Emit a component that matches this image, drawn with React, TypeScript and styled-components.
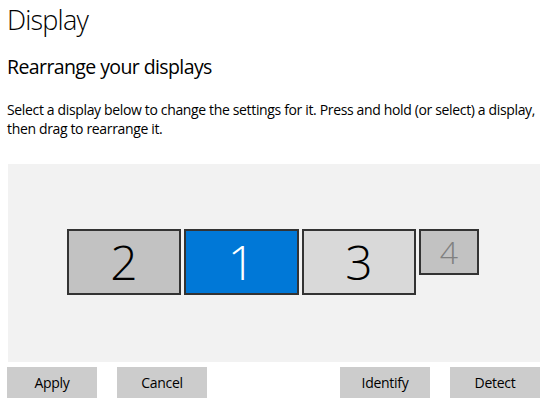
import React from 'react';
import styled, { createGlobalStyle } from 'styled-components';

const GlobalStyle = createGlobalStyle`
  html, body {
    margin: 0;
    padding: 0;
    background: #ffffff;
  }
  body {
    font-family: 'Open Sans', 'Noto Sans', 'Liberation Sans', sans-serif;
    color: #000000;
  }
`;

const Page = styled.div`
  width: 548px;
  height: 406px;
  overflow: hidden;
  padding: 0 8px 0 7px;
  box-sizing: border-box;
`;

const Title = styled.h1`
  margin: 0;
  padding-top: 1px;
  font-size: 27px;
  font-weight: 300;
  line-height: 38px;
  letter-spacing: -0.8px;
`;

const Subtitle = styled.h2`
  margin: 15px 0 0;
  font-size: 19.5px;
  font-weight: 400;
  line-height: 26px;
  letter-spacing: -0.6px;
`;

const Description = styled.p`
  margin: 20px 0 0;
  font-size: 14px;
  line-height: 19px;
  letter-spacing: -0.35px;
`;

const Arrangement = styled.div`
  margin: 26px 0 0 1px;
  width: 532px;
  height: 198px;
  background: #f2f2f2;
  display: flex;
  align-items: center;
  justify-content: center;
`;

const MonitorRow = styled.div`
  display: flex;
  align-items: flex-start;
  gap: 3px;
  margin-left: -2px;
  margin-top: -2px;
`;

type Variant = 'idle' | 'selected' | 'light' | 'inactive';

const backgrounds: Record<Variant, string> = {
  idle: '#c2c2c2',
  selected: '#0078d7',
  light: '#d9d9d9',
  inactive: '#c2c2c2',
};

const Monitor = styled.div<{ $variant: Variant; $w: number; $h: number }>`
  box-sizing: border-box;
  width: ${(p) => p.$w}px;
  height: ${(p) => p.$h}px;
  border: 2px solid #333333;
  background: ${(p) => backgrounds[p.$variant]};
  color: ${(p) =>
    p.$variant === 'selected' ? '#ffffff' : p.$variant === 'inactive' ? '#808080' : '#000000'};
  display: flex;
  align-items: center;
  justify-content: center;
  font-size: ${(p) => (p.$variant === 'inactive' ? 32 : 48)}px;
  font-weight: 300;
  line-height: 1;
`;

const ButtonBar = styled.div`
  margin-top: 5px;
  display: flex;
  gap: 20px;
`;

const Spacer = styled.div`
  flex: 1;
`;

const Button = styled.button`
  width: 90px;
  height: 31px;
  border: none;
  background: #cccccc;
  color: #000000;
  font-family: inherit;
  font-size: 14px;
  letter-spacing: -0.3px;
  padding: 0;
`;

const monitors: { id: string; variant: Variant; w: number; h: number }[] = [
  { id: '2', variant: 'idle', w: 114, h: 66 },
  { id: '1', variant: 'selected', w: 115, h: 66 },
  { id: '3', variant: 'light', w: 114, h: 66 },
  { id: '4', variant: 'inactive', w: 60, h: 46 },
];

export default function App() {
  return (
    <Page>
      <GlobalStyle />
      <Title>Display</Title>
      <Subtitle>Rearrange your displays</Subtitle>
      <Description>
        Select a display below to change the settings for it. Press and hold (or select) a display,
        then drag to rearrange it.
      </Description>
      <Arrangement>
        <MonitorRow>
          {monitors.map((m) => (
            <Monitor key={m.id} $variant={m.variant} $w={m.w} $h={m.h}>
              {m.id}
            </Monitor>
          ))}
        </MonitorRow>
      </Arrangement>
      <ButtonBar>
        <Button>Apply</Button>
        <Button>Cancel</Button>
        <Spacer />
        <Button>Identify</Button>
        <Button>Detect</Button>
      </ButtonBar>
    </Page>
  );
}
